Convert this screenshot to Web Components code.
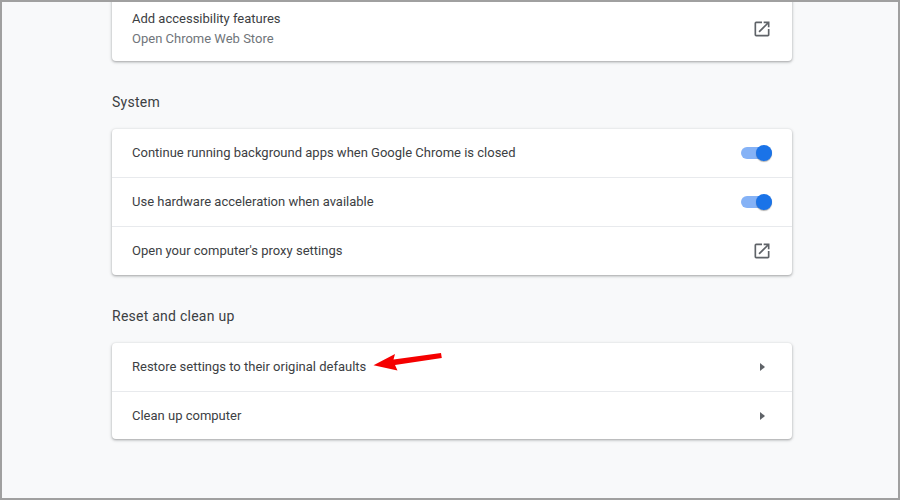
<!DOCTYPE html>
<html><head><meta charset="utf-8">
<style>html,body{margin:0;padding:0;background:#f8f9fa}</style>
</head><body>
<settings-page>
  <settings-card class="first">
    <settings-row slot-type="two">
      <span>Add accessibility features</span>
      <span slot="sub">Open Chrome Web Store</span>
      <ext-icon slot="end"></ext-icon>
    </settings-row>
  </settings-card>
  <section-title>System</section-title>
  <settings-card>
    <settings-row>Continue running background apps when Google Chrome is closed<toggle-switch slot="end"></toggle-switch></settings-row>
    <settings-row class="tall">Use hardware acceleration when available<toggle-switch slot="end"></toggle-switch></settings-row>
    <settings-row class="tall">Open your computer's proxy settings<ext-icon slot="end"></ext-icon></settings-row>
  </settings-card>
  <section-title>Reset and clean up</section-title>
  <settings-card>
    <settings-row>Restore settings to their original defaults<arrow-note></arrow-note><sub-arrow slot="end"></sub-arrow></settings-row>
    <settings-row>Clean up computer<sub-arrow slot="end"></sub-arrow></settings-row>
  </settings-card>
</settings-page>
<script>
function def(name, html){
  customElements.define(name, class extends HTMLElement{
    constructor(){super();this.attachShadow({mode:'open'}).innerHTML=html;}
  });
}
def('settings-page',`<style>
:host{display:block;box-sizing:border-box;width:900px;height:500px;border:2px solid #a0a0a0;background:#f8f9fa;overflow:hidden;
font-family:Roboto,"Liberation Sans",sans-serif;color:#3c4043}
.col{width:680px;margin-left:110px;display:flex;flex-direction:column}
</style><div class="col"><slot></slot></div>`);
def('settings-card',`<style>
:host{display:block;background:#fff;border-radius:4px;box-shadow:0 1px 2px rgba(60,64,67,.3),0 1px 3px 1px rgba(60,64,67,.15)}
:host(.first){margin-top:-10px;padding-top:10px}
::slotted(settings-row:not(:first-child)){border-top:1px solid #e8eaed}
</style><slot></slot>`);
def('section-title',`<style>
:host{display:flex;align-items:center;height:68px;box-sizing:border-box;padding-top:14px;font-size:14px;letter-spacing:.25px;color:#3c4043}
</style><slot></slot>`);
def('settings-row',`<style>
:host{display:flex;align-items:center;position:relative;box-sizing:border-box;min-height:48px;padding:0 20px;font-size:13px;line-height:20px;color:#3c4043}
:host(.tall){min-height:49px}
:host([slot-type=two]){height:59px;padding-bottom:6px}
.t{flex:1;display:flex;flex-direction:column}
.s{color:#70757a}
.e{display:flex;align-items:center;justify-content:center}
</style><div class="t"><div><slot></slot></div><div class="s"><slot name="sub"></slot></div></div><div class="e"><slot name="end"></slot></div>`);
def('toggle-switch',`<style>
:host{display:block;position:relative;width:31px;height:12px;border-radius:6px;background:#85b2f6}
i{position:absolute;right:0;top:-2px;width:16px;height:16px;border-radius:50%;background:#1a73e8;box-shadow:0 1px 1px rgba(0,0,0,.3)}
</style><i></i>`);
def('ext-icon',`<style>:host{display:block;width:20px;height:20px}svg{display:block}</style>
<svg width="20" height="20" viewBox="0 0 24 24" fill="#5f6368"><path d="M19 19H5V5h7V3H5a2 2 0 0 0-2 2v14a2 2 0 0 0 2 2h14c1.1 0 2-.9 2-2v-7h-2v7zM14 3v2h3.59l-9.83 9.83 1.41 1.41L19 6.41V10h2V3h-7z"/></svg>`);
def('sub-arrow',`<style>:host{display:block;width:20px;height:20px}svg{display:block}</style>
<svg width="20" height="20" viewBox="0 0 20 20" fill="#5f6368"><path d="M8 6l5 4-5 4z"/></svg>`);
def('arrow-note',`<style>:host{position:absolute;left:260px;top:10px;width:70px;height:20px;display:block}svg{display:block;overflow:visible}</style>
<svg width="70" height="20" viewBox="372 355 70 20" fill="#f50000" stroke="none"><path d="M373.5 367.2L395 356 393.5 361.5 441 355 441.8 360 395 367 397.5 372.5z"/></svg>`);
</script>
</body></html>
